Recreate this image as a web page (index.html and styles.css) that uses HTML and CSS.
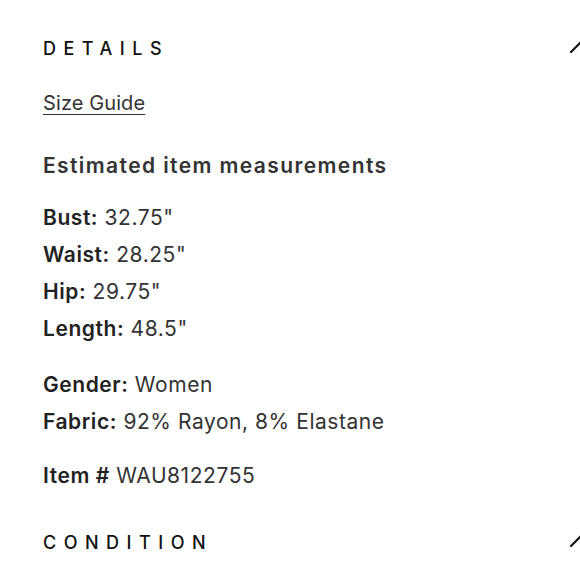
FILE: index.html
```html
<!DOCTYPE html>
<html>
<head>
<meta charset="utf-8">
<link rel="stylesheet" href="styles.css">
</head>
<body>
<div class="page">
  <section class="section">
    <div class="section-head">
      <h2 class="section-title">DETAILS</h2>
      <svg class="chevron" width="24" height="14" viewBox="0 0 24 14"><path d="M2 12 L12 2 L22 12" fill="none" stroke="#111" stroke-width="2.2" stroke-linecap="round" stroke-linejoin="round"/></svg>
    </div>
    <a class="size-guide" href="#">Size Guide</a>
    <h3 class="subhead">Estimated item measurements</h3>
    <ul class="list list-measure">
      <li><b>Bust:</b> 32.75"</li>
      <li><b>Waist:</b> 28.25"</li>
      <li><b>Hip:</b> 29.75"</li>
      <li><b>Length:</b> 48.5"</li>
    </ul>
    <ul class="list list-info">
      <li><b>Gender:</b> Women</li>
      <li><b>Fabric:</b> 92% Rayon, 8% Elastane</li>
    </ul>
    <ul class="list list-item">
      <li><b>Item #</b> WAU8122755</li>
    </ul>
  </section>
  <section class="section">
    <div class="section-head">
      <h2 class="section-title">CONDITION</h2>
      <svg class="chevron" width="24" height="14" viewBox="0 0 24 14"><path d="M2 12 L12 2 L22 12" fill="none" stroke="#111" stroke-width="2.2" stroke-linecap="round" stroke-linejoin="round"/></svg>
    </div>
  </section>
</div>
</body>
</html>
```

FILE: styles.css
```css
html, body {
  margin: 0;
  padding: 0;
  background: #fff;
}
body {
  font-family: Inter, "Liberation Sans", sans-serif;
  color: #333;
  width: 580px;
  height: 580px;
  overflow: hidden;
}
.page {
  padding: 38px 0 0 43px;
  width: 560px;
}
.section-head {
  display: flex;
  justify-content: space-between;
  align-items: center;
  width: 550px;
}
.section-title {
  margin: 0;
  font-size: 18px;
  font-weight: 500;
  letter-spacing: 7.5px;
  color: #111;
  line-height: 22px;
}
.chevron {
  display: block;
  flex: none;
  margin-bottom: 4px;
}
.size-guide {
  display: inline-block;
  margin-top: 31px;
  font-size: 20px;
  letter-spacing: 0.1px;
  color: #333;
  text-decoration: underline;
  text-underline-offset: 4px;
  text-decoration-thickness: 1px;
  line-height: 24px;
}
.subhead {
  margin: 39px 0 0;
  font-size: 21px;
  font-weight: 600;
  letter-spacing: 1.4px;
  color: #333;
  line-height: 24px;
}
.list {
  list-style: none;
  margin: 0;
  padding: 0;
}
.list-measure { margin-top: 21px; }
.list-info { margin-top: 19px; }
.list-item { margin-top: 17px; }
.list li {
  font-size: 21px;
  line-height: 37px;
  letter-spacing: 0.55px;
  color: #333;
}
.list b {
  font-weight: 600;
  color: #222;
}
.section + .section {
  margin-top: 38px;
}
```
